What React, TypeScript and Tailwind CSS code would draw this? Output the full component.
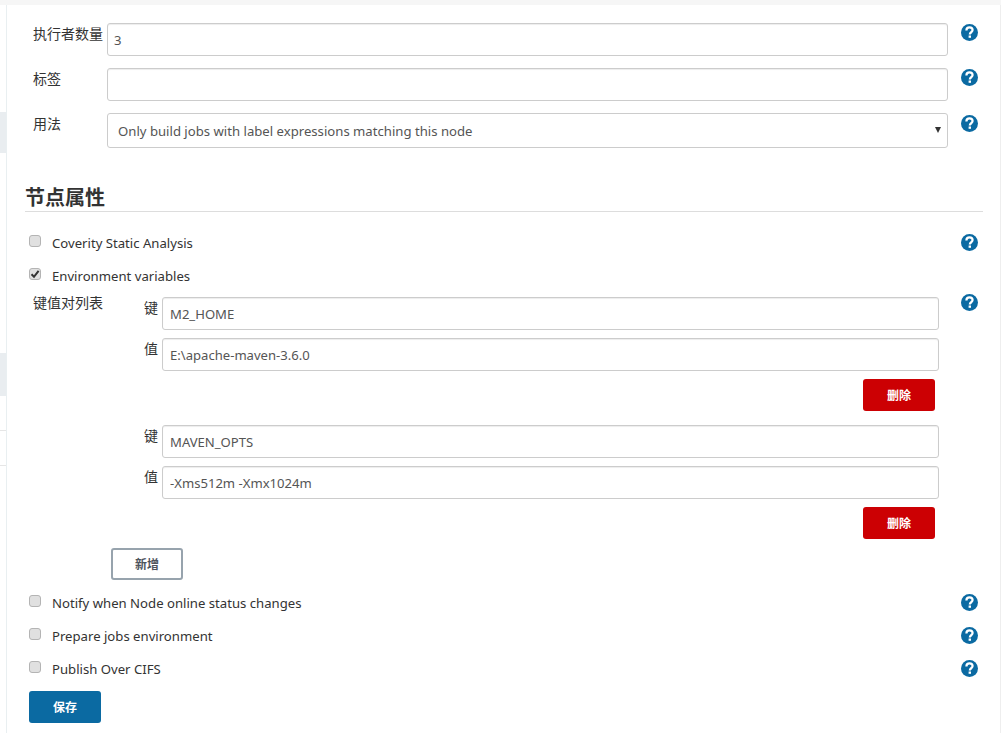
const font = "font-['Noto_Sans','Noto_Sans_CJK_SC',sans-serif]";

function HelpIcon({ className = "" }: { className?: string }) {
  return (
    <svg width="17" height="17" viewBox="0 0 17 17" className={`shrink-0 ${className}`}>
      <circle cx="8.5" cy="8.5" r="8.5" fill="#0b6aa2" />
      <path
        d="M5.4 6.5 C5.4 4.5 6.9 3.4 8.5 3.4 C10.3 3.4 11.6 4.5 11.6 6.1 C11.6 8.3 8.8 8.2 8.8 10.4"
        fill="none"
        stroke="#fff"
        strokeWidth="2.2"
      />
      <rect x="7.6" y="11.5" width="2.4" height="2.3" fill="#fff" />
    </svg>
  );
}

function TextInput({ value = "", className = "" }: { value?: string; className?: string }) {
  return (
    <input
      readOnly
      value={value}
      className={`h-[33px] rounded-[3px] border border-[#ccc] bg-white text-[13.1px] text-[#555] shadow-[inset_0_1px_1px_rgba(0,0,0,0.075)] outline-none ${className}`}
    />
  );
}

function FormRow({ label, value, className = "" }: { label: string; value?: string; className?: string }) {
  return (
    <div className={`flex items-start pl-[26px] ${className}`}>
      <div className="w-[74px] shrink-0 pt-[1px] text-[14px] leading-[20px] text-[#333] whitespace-nowrap">{label}</div>
      <TextInput value={value} className="w-[841px] px-[6px]" />
      <HelpIcon className="ml-[13px] mt-[1px]" />
    </div>
  );
}

function CheckRow({ label, checked = false, help = true, className = "" }: { label: string; checked?: boolean; help?: boolean; className?: string }) {
  return (
    <div className={`flex h-[20px] items-center pl-[22px] ${className}`}>
      <span className="relative -top-[2px] flex h-[12px] w-[12px] shrink-0 items-center justify-center rounded-[3px] border border-[#b4b4b4] bg-[#e0e0e0]">
        {checked && (
          <svg width="10" height="10" viewBox="0 0 10 10">
            <path d="M1.5 5.2 L4 7.8 L8.6 1.8" fill="none" stroke="#333" strokeWidth="2" />
          </svg>
        )}
      </span>
      <span className="ml-[11px] text-[13.15px] leading-[20px] text-[#333] whitespace-nowrap">{label}</span>
      {help && <HelpIcon className="ml-auto mr-[22px] mb-[2px]" />}
    </div>
  );
}

function KeyValue({ label, value, className = "" }: { label: string; value: string; className?: string }) {
  return (
    <div className={`flex items-start ${className}`}>
      <div className="w-[18px] shrink-0 pt-[1px] text-[14px] leading-[20px] text-[#333]">{label}</div>
      <TextInput value={value} className="w-[777px] px-[7px]" />
    </div>
  );
}

function KeyValueBlock({ name, value, className = "" }: { name: string; value: string; className?: string }) {
  return (
    <div className={className}>
      <KeyValue label="键" value={name} />
      <KeyValue label="值" value={value} className="mt-[8px]" />
      <div className="mt-[8px] flex pl-[719px]">
        <button className="h-[32px] w-[72px] rounded-[3px] bg-[#cc0003] pt-[2px] text-[12px] font-bold text-white">删除</button>
      </div>
    </div>
  );
}

export default function App() {
  return (
    <div className={`flex h-[733px] w-[1001px] flex-col overflow-hidden bg-white ${font}`}>
      <div className="h-[5px] shrink-0 bg-[#f6f6f6]" />

      <div className="flex min-h-0 flex-1">
        {/* left rail, what is left of the side panel */}
        <div className="flex w-[7px] shrink-0 flex-col border-r border-[#e9eff1] bg-white">
          <div className="mt-[107px] h-[41px] bg-[#e9edf0]" />
          <div className="mt-[200px] h-[43px] bg-[#e9edf0]" />
          <div className="mt-[34px] h-px bg-[#e6e6e6]" />
          <div className="mt-[34px] h-px bg-[#e6e6e6]" />
        </div>

        <div className="flex min-w-0 flex-1 flex-col border-r border-[#eeeeee]">
          <FormRow label="执行者数量" value="3" className="mt-[18px]" />
          <FormRow label="标签" className="mt-[12px]" />

          <div className="mt-[12px] flex items-start pl-[26px]">
            <div className="w-[74px] shrink-0 pt-[1px] text-[14px] leading-[20px] text-[#333]">用法</div>
            <div className="relative flex h-[35px] w-[841px] items-center rounded-[3px] border border-[#ccc] bg-white pl-[10px] pt-[2px] text-[13.15px] text-[#555]">
              Only build jobs with label expressions matching this node
              <span className="absolute right-[6px] top-[13px] h-0 w-0 border-x-[3px] border-t-[6px] border-x-transparent border-t-[#333]" />
            </div>
            <HelpIcon className="ml-[13px] mt-[2px]" />
          </div>

          <div className="ml-[18px] mr-[17px] mt-[37px] h-[27px] border-b border-[#ddd] text-[20px] font-bold leading-[26px] text-[#333]">
            节点属性
          </div>

          <CheckRow label="Coverity Static Analysis" className="mt-[21px]" />
          <CheckRow label="Environment variables" checked help={false} className="mt-[13px]" />

          <div className="mt-[11px] flex items-start pl-[26px]">
            <div className="-mt-[4px] w-[111px] shrink-0 text-[14px] leading-[20px] text-[#333]">键值对列表</div>
            <div className="flex w-[817px] shrink-0 flex-col">
              <KeyValueBlock name="M2_HOME" value="E:\apache-maven-3.6.0" />
              <KeyValueBlock name="MAVEN_OPTS" value="-Xms512m -Xmx1024m" className="mt-[14px]" />
            </div>
            <HelpIcon className="-mt-[3px]" />
          </div>

          <div className="ml-[104px] mt-[9px] flex">
            <button className="h-[32px] w-[72px] rounded-[3px] border-2 border-[#97a3ad] bg-white pt-[2px] text-[12px] font-bold text-[#4d545d]">新增</button>
          </div>

          <CheckRow label="Notify when Node online status changes" className="mt-[13px]" />
          <CheckRow label="Prepare jobs environment" className="mt-[13px]" />
          <CheckRow label="Publish Over CIFS" className="mt-[13px]" />

          <div className="ml-[22px] mt-[12px] flex">
            <button className="h-[32px] w-[72px] rounded-[3px] bg-[#0b6aa2] pt-[2px] text-[12px] font-bold text-white">保存</button>
          </div>
        </div>
      </div>
    </div>
  );
}
